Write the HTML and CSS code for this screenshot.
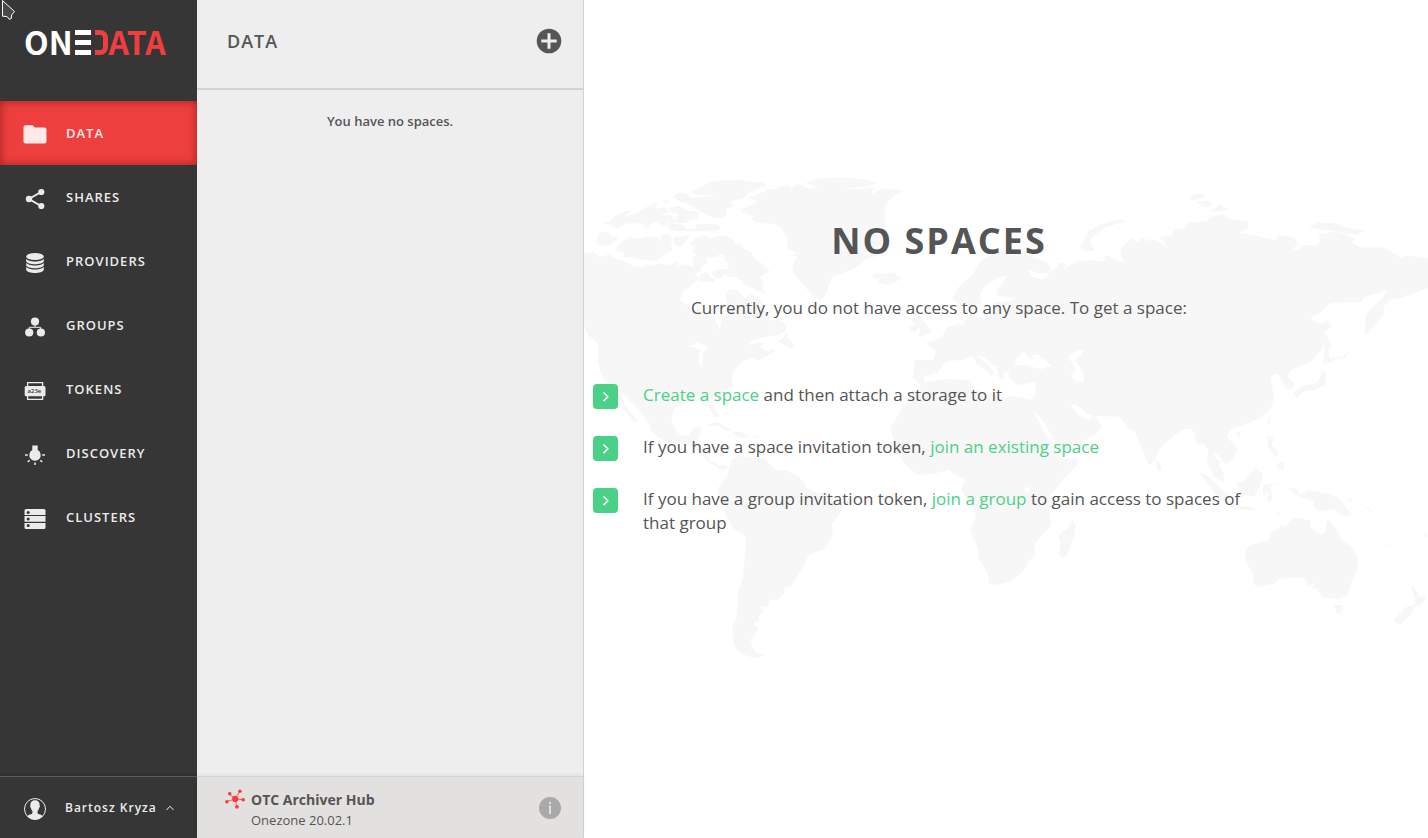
FILE: index.html
```html
<!DOCTYPE html>
<html lang="en">
<head>
<meta charset="utf-8">
<title>Onedata</title>
<link rel="stylesheet" href="styles.css">
</head>
<body>
<div class="app">
  <aside class="sidebar">
    <a class="logo" href="#" aria-label="Onedata">
      <span class="logo-text">ON</span>
      <span class="logo-bars"></span>
      <span class="logo-bracket"></span>
      <span class="logo-text logo-red">ATA</span>
    </a>
    <nav class="nav">
      <a class="nav-item active" href="#">
        <svg class="icon" viewBox="0 0 24 24"><path d="M2.500 2.200h7L12 4.600h9.500a2 2 0 0 1 2 2v12a2 2 0 0 1-2 2h-19a2 2 0 0 1-2-2V4.200a2 2 0 0 1 2-2z"/></svg>
        <span>DATA</span></a>
      <a class="nav-item" href="#">
        <svg class="icon" viewBox="0 0 24 24"><path d="M18 5 6 12l12 7" fill="none" stroke="currentColor" stroke-width="2"/><circle cx="18.300" cy="5" r="3.100"/><circle cx="6" cy="12" r="3.200"/><circle cx="18.300" cy="19" r="3.100"/></svg>
        <span>SHARES</span></a>
      <a class="nav-item" href="#">
        <svg class="icon" viewBox="0 0 24 24"><ellipse cx="12" cy="5.500" rx="8.800" ry="3.600"/><path d="M3.200 7.500c1 4 16.600 4 17.600 0v2.800c-1 4-16.600 4-17.600 0zM3.200 11.500c1 4 16.600 4 17.600 0v2.800c-1 4-16.600 4-17.600 0zM3.200 15.500c1 4 16.600 4 17.600 0v3.200c-1 4.400-16.600 4.400-17.600 0z"/></svg>
        <span>PROVIDERS</span></a>
      <a class="nav-item" href="#">
        <svg class="icon" viewBox="0 0 24 24"><path d="M12 8v4M6.300 17v-4.700h11.400V17" fill="none" stroke="currentColor" stroke-width="1"/><circle cx="12" cy="6.500" r="4.100"/><circle cx="6.200" cy="17.500" r="4.100"/><circle cx="17.900" cy="17.500" r="4.100"/></svg>
        <span>GROUPS</span></a>
      <a class="nav-item" href="#">
        <svg class="icon" viewBox="0 0 24 24"><path d="M4.600 7V3.700h15V7M4.600 17v3.300h15V17" fill="none" stroke="currentColor" stroke-width="1.300"/><rect x="1.700" y="7" width="20.800" height="10.300" rx="1.500"/><text class="token-code" x="4.500" y="14">a23e</text></svg>
        <span>TOKENS</span></a>
      <a class="nav-item" href="#">
        <svg class="icon" viewBox="0 0 24 24"><path d="M9.300 2.500h5.400V7a5.700 5.700 0 1 1-5.400 0z"/><path d="M2 12h2.800M19.200 12H22M4.700 18.800l2-1.400M19.300 18.800l-2-1.400M12 19.500V22" fill="none" stroke="currentColor" stroke-width="1.500"/></svg>
        <span>DISCOVERY</span></a>
      <a class="nav-item" href="#">
        <svg class="icon" viewBox="0 0 24 24"><path d="M3 2h18a1.500 1.500 0 0 1 1.500 1.500V8h-21V3.500A1.500 1.500 0 0 1 3 2zM1.500 9h21v5.800h-21zM1.500 15.900h21v4.600A1.500 1.500 0 0 1 21 22H3a1.500 1.500 0 0 1-1.500-1.500z"/><g fill="#363636"><circle cx="5.200" cy="5.400" r="1.500"/><circle cx="5.200" cy="11.900" r="1.500"/><circle cx="5.200" cy="18.500" r="1.500"/></g></svg>
        <span>CLUSTERS</span></a>
    </nav>
    <button class="user" type="button">
      <svg class="icon" viewBox="0 0 24 24"><circle cx="12" cy="12" r="10.500" fill="none" stroke="currentColor" stroke-width="1"/><path d="M12 3.200c3.200 0 4.800 2.200 4.600 5 .4.300.4 2-.4 2.600-.5 2-1.200 2.800-1.700 3.500 0 2.200.3 2.500 1.600 3 1.500.5 3 .9 3.600 2.200A10.500 10.500 0 0 1 12 22.500a10.500 10.500 0 0 1-7.700-3c.6-1.300 2.100-1.700 3.600-2.200 1.300-.5 1.600-.8 1.600-3-.5-.7-1.200-1.500-1.700-3.500-.8-.6-.8-2.300-.4-2.600-.2-2.800 1.400-5 4.600-5z"/></svg>
      <span class="user-name">Bartosz Kryza</span>
      <svg class="caret" viewBox="0 0 8 6"><path d="M.5 5 4 1.200 7.500 5"/></svg>
    </button>
  </aside>

  <section class="panel">
    <header class="panel-head">
      <h2 class="panel-title">DATA</h2>
      <button class="round-button" type="button" aria-label="Add space">
        <svg class="plus" viewBox="0 0 26 26"><circle cx="13" cy="13" r="12.300"/><path d="M13 5.300v15.400M5.300 13h15.400"/></svg>
      </button>
    </header>
    <p class="panel-empty">You have no spaces.</p>
    <footer class="panel-foot">
      <svg class="hub" viewBox="0 0 20 20"><path d="M10 10 4.500 5M10 10l4.700-7.500M10 10l8.200.7M10 10l2 7.700M10 10l-8.500 2.700" fill="none" stroke="currentColor" stroke-width=".8"/><circle cx="10.200" cy="9.900" r="3.100"/><circle cx="4.700" cy="4.800" r="1.800"/><circle cx="14.900" cy="2.200" r="1.800"/><circle cx="18.200" cy="10.700" r="1.800"/><circle cx="12" cy="17.800" r="1.900"/><circle cx="1.900" cy="12.700" r="1.800"/></svg>
      <div class="hub-text">
        <strong class="hub-name">OTC Archiver Hub</strong>
        <span class="hub-version">Onezone 20.02.1</span>
      </div>
      <button class="round-button" type="button" aria-label="About">
        <svg class="info" viewBox="0 0 22 22"><circle cx="11" cy="11" r="11"/><rect x="10" y="8.500" width="2" height="8.500"/><rect x="10" y="5" width="2" height="2"/></svg>
      </button>
    </footer>
  </section>

  <main class="main">
    <svg class="map" viewBox="0 -480 2532 2514" preserveAspectRatio="xMinYMid slice" aria-hidden="true">
      <!-- North America -->
      <path d="M0 280 28 275 48 292 75 283 95 296 120 302 148 318 180 321 185 314 205 318 222 310 262 317 276 300 282 318 300 312 330 320 325 300 338 280 352 290 365 285 372 310 352 318 348 338 330 340 346 358 320 378 296 395 288 420 305 432 318 442 345 448 372 466 392 472 398 492 408 507 413 478 436 452 428 420 425 398 438 388 462 392 482 415 502 402 530 420 543 452 560 482 585 478 606 492 606 512 580 526 535 532 500 545 492 555 520 548 540 548 530 560 545 574 565 568 575 572 545 590 520 603 512 592 500 594 475 605 448 632 443 665 450 678 420 694 392 716 382 732 400 756 405 770 392 770 372 740 345 724 318 726 296 734 272 744 262 772 270 805 290 826 316 826 326 804 352 800 350 820 340 840 352 866 374 882 380 904 404 915 422 915 435 922 422 932 398 922 372 905 358 888 330 862 300 850 260 850 225 833 198 810 196 790 170 755 138 722 110 697 122 735 165 788 150 784 112 740 90 698 64 665 50 638 42 600 42 552 12 524 0 500z"/>
      <!-- Arctic archipelago -->
      <path d="M318 96 342 85 390 62 470 60 535 68 551 78 500 94 478 116 440 122 448 138 426 148 425 168 395 176 345 152 318 135 288 125 268 112 282 99 302 98 326 114 350 112 400 106 370 104 340 106zM255 142 285 138 310 152 342 155 340 176 300 182 275 174 282 162 258 156zM55 188 78 184 90 170 120 155 142 150 125 168 152 162 170 150 200 134 220 132 215 148 245 140 256 155 238 164 270 166 265 176 298 178 318 186 290 190 250 186 245 200 215 186 200 190 188 207 170 190 130 190 98 205 85 195zM240 122 256 120 250 130 238 130zM202 132 220 128 215 138zM335 193 395 192 414 204 398 214 310 214 300 206 338 206zM255 188 290 194 306 202 300 214 275 213 250 204zM45 218 72 216 82 228 104 232 92 242 78 254 48 258 34 250 40 235zM98 262 112 246 138 232 165 236 192 228 222 232 232 250 226 226 258 224 265 240 260 252 266 270 245 282 214 304 170 298 142 292 118 290 120 276 98 274zM268 232 318 226 300 250 290 262 272 254zM328 238 360 226 378 236 400 228 430 228 448 240 448 250 472 254 480 266 502 278 510 294 528 305 558 332 540 342 528 352 540 368 536 384 546 402 518 392 505 384 480 372 458 352 438 350 420 344 408 356 390 350 382 336 410 328 432 326 434 310 418 296 426 282 404 284 398 290 372 292 350 290 325 276 332 262 320 252zM345 345 368 336 380 352 395 358 390 370 368 364 350 366z"/>
      <!-- Greenland and Iceland -->
      <path d="M470 150 498 138 522 124 508 120 486 114 508 108 548 92 538 86 578 88 580 80 614 76 622 84 640 72 678 86 700 80 664 70 700 56 775 52 842 58 880 70 842 80 785 86 815 88 868 82 864 102 900 84 925 88 960 92 938 102 912 122 902 148 902 180 908 205 905 240 880 262 902 268 885 286 845 298 818 322 775 340 748 346 735 376 722 412 710 421 688 410 668 386 648 362 632 345 625 326 626 310 640 290 622 286 640 278 612 268 608 230 590 200 570 192 512 188 502 176 512 168 478 160zM865 345 878 340 900 342 932 336 936 344 951 352 940 364 905 376 876 366 892 358 868 354z"/>
      <!-- Caribbean and Newfoundland -->
      <path d="M580 545 600 530 608 516 610 535 628 550 630 568 610 562 600 555zM366 796 395 786 420 796 448 812 426 811 400 798zM422 828 440 828 438 833zM446 816 468 814 488 825 500 830 478 834 455 830zM510 828 526 829 518 834zM418 760 430 756 428 764z"/>
      <!-- South America -->
      <path d="M437 922 442 900 468 882 476 890 500 890 530 896 545 892 552 910 578 930 612 932 640 946 662 970 668 985 702 998 745 1005 776 1026 780 1040 760 1070 744 1090 746 1126 734 1148 720 1168 690 1178 670 1192 660 1220 634 1258 620 1278 600 1282 602 1300 584 1318 556 1320 556 1334 546 1342 530 1338 540 1354 524 1370 524 1384 508 1392 526 1404 510 1424 500 1440 505 1460 515 1476 543 1484 530 1490 508 1494 470 1480 448 1456 445 1400 456 1376 462 1340 462 1296 476 1250 482 1200 486 1130 450 1108 430 1076 415 1034 400 1002 404 980 428 952z"/>
      <!-- Europe, Asia and Africa -->
      <path d="M1105 416 1120 385 1165 345 1190 302 1220 284 1250 270 1290 274 1340 288 1390 308 1402 325 1390 340 1358 338 1330 328 1345 350 1372 358 1390 350 1394 338 1424 318 1422 308 1445 308 1440 326 1475 305 1520 300 1562 304 1565 285 1590 296 1624 308 1610 290 1610 268 1645 231 1662 252 1672 234 1702 246 1695 234 1732 248 1750 266 1742 246 1722 232 1762 226 1768 208 1800 205 1815 188 1866 184 1880 172 1915 163 1940 178 1992 184 1994 204 1966 220 2010 226 2076 240 2086 224 2130 232 2142 252 2126 266 2142 272 2158 254 2202 258 2208 244 2204 224 2230 220 2252 214 2290 224 2312 238 2302 246 2330 262 2400 262 2435 284 2456 298 2462 286 2532 295 2532 385 2500 396 2450 414 2420 420 2398 440 2400 462 2378 490 2342 528 2344 465 2370 435 2396 415 2410 388 2392 398 2364 404 2340 412 2332 428 2302 426 2240 430 2212 454 2178 476 2205 492 2232 482 2242 500 2220 520 2216 565 2180 605 2118 632 2112 650 2130 670 2126 686 2104 688 2090 655 2078 640 2058 652 2064 676 2070 715 2062 742 2048 760 2018 780 1960 800 1936 812 1930 830 1960 866 1948 895 1926 912 1906 888 1884 874 1918 938 1918 968 1890 948 1868 905 1874 874 1860 852 1836 850 1832 818 1820 806 1796 808 1756 838 1724 870 1716 895 1698 916 1684 894 1664 842 1652 814 1640 812 1608 770 1534 768 1510 762 1490 744 1470 732 1462 736 1482 765 1516 782 1528 766 1558 800 1532 826 1484 850 1426 872 1420 884 1430 898 1484 894 1476 920 1440 955 1396 1010 1394 1040 1402 1094 1354 1150 1350 1190 1332 1206 1320 1232 1278 1266 1240 1274 1216 1274 1210 1238 1186 1200 1180 1160 1158 1112 1176 1070 1160 1030 1130 990 1146 956 1120 950 1094 930 1050 942 1000 944 960 910 935 870 920 805 950 750 982 712 1012 675 985 655 992 600 1048 600 1054 572 1024 550 1070 536 1090 502 1136 490 1158 464 1160 440 1130 436z"/>
      <path d="M982 475 1010 470 1024 492 1042 516 1020 528 1002 530 1010 508 995 500zM976 500 998 492 1000 512 980 518zM1488 265 1505 230 1512 216 1550 192 1615 178 1630 182 1560 204 1522 234 1518 252 1534 272 1508 274zM1810 122 1828 104 1850 98 1866 110 1840 118zM1834 124 1880 122 1884 138 1858 140zM1878 156 1910 132 1932 150zM2174 200 2200 188 2252 190 2282 200 2344 214 2316 224 2250 212 2220 210zM2128 698 2155 678 2200 668 2212 646 2212 628 2228 640 2224 674 2192 690 2160 694 2136 715zM2216 518 2230 530 2244 562 2232 562 2236 594 2268 590 2240 606 2216 614 2222 580zM2262 600 2298 572 2284 592z"/>
      <!-- Islands of the Indian and Pacific oceans -->
      <g transform="translate(1248 720)">
        <path d="M174 404 200 388 216 360 228 376 222 410 202 465 190 475 176 465 182 430zM468 182 482 190 486 208 472 213zM595 216 622 226 652 256 690 290 690 308 660 300 630 262zM640 170 668 188 652 190zM708 246 730 244 766 204 788 222 784 248 762 290 722 282zM690 318 740 320 780 328 740 330 694 324zM790 254 842 250 812 258 818 300 802 306 806 276 788 292zM800 108 820 110 816 136 838 160 826 170 805 142zM830 190 850 186 850 212 832 202zM780 212 802 178 790 200zM800 70 812 52 808 76zM706 96 724 94 718 110zM864 264 890 266 902 284 924 270 980 280 1015 294 1034 316 1056 346 1030 346 1002 328 960 334 940 320 942 304 890 286zM1035 302 1066 292 1050 306zM822 348 848 328 838 342zM1080 310 1145 348 1110 332zM1160 430 1182 444 1170 440zM1178 386 1196 412 1188 402zM1268 404 1280 402 1280 412 1270 412z"/>
        <path d="M736 450 748 436 806 420 812 400 836 384 842 376 856 380 880 354 934 360 930 382 966 406 976 396 984 352 998 376 1014 392 1022 418 1052 440 1074 470 1072 508 1050 560 1042 588 1016 597 970 592 952 568 934 566 946 546 924 560 914 534 880 530 836 538 820 552 776 560 758 552 762 530 744 496 736 474zM1002 614 1030 616 1026 640 1010 642zM1232 552 1250 572 1256 586 1278 592 1260 616 1242 620 1244 598zM1178 664 1216 622 1242 614 1240 634 1202 674z"/>
      </g>
      <!-- Inland seas -->
      <g fill="#fff">
        <path d="M310 560 340 547 368 558 372 572 358 574 354 610 348 618 344 590 350 572 330 562zM1172 470 1164 452 1180 430 1194 432 1186 410 1200 382 1234 356 1270 346 1254 372 1236 392 1244 408 1292 416 1270 424 1230 428 1226 460 1196 474zM1016 668 1022 648 1060 640 1078 610 1112 600 1130 604 1150 592 1170 590 1178 614 1210 632 1218 650 1230 638 1210 612 1176 584 1200 592 1238 622 1246 656 1260 660 1258 640 1276 630 1272 650 1300 676 1355 666 1354 702 1342 720 1288 708 1250 714 1222 692 1214 706 1170 688 1160 662 1100 656 1060 660zM1290 614 1296 598 1320 574 1334 594 1350 598 1344 586 1366 586 1404 618 1368 628 1330 616zM1454 590 1480 570 1500 572 1494 586 1474 600 1498 636 1500 666 1476 664 1462 648 1474 628zM1344 746 1376 780 1410 840 1422 876 1400 850 1366 786zM1322 984 1338 980 1338 992 1324 998z"/>
      </g>
    </svg>
    <div class="content">
      <h1 class="title">NO SPACES</h1>
      <p class="lead">Currently, you do not have access to any space. To get a space:</p>
      <ul class="steps">
        <li class="step"><span class="step-icon"><svg class="chevron" viewBox="0 0 8 12"><path d="m1.500 1.500 4.300 4.300-4.300 4.300"/></svg></span><p class="step-text"><a href="#">Create a space</a> and then attach a storage to it</p></li>
        <li class="step"><span class="step-icon"><svg class="chevron" viewBox="0 0 8 12"><path d="m1.500 1.500 4.300 4.300-4.300 4.300"/></svg></span><p class="step-text">If you have a space invitation token, <a href="#">join an existing space</a></p></li>
        <li class="step"><span class="step-icon"><svg class="chevron" viewBox="0 0 8 12"><path d="m1.500 1.500 4.300 4.300-4.300 4.300"/></svg></span><p class="step-text">If you have a group invitation token, <a href="#">join a group</a> to gain access to spaces of that group</p></li>
      </ul>
    </div>
  </main>
  <svg class="pointer" viewBox="0 0 16 22" aria-hidden="true"><path d="M2.500.5v15.700l4.500.3 2.300 2.800 2-.8.300-3.500 2.900-3.500z"/></svg>
</div>
</body>
</html>
```
FILE: styles.css
```css
* {
  box-sizing: border-box;
}

body {
  margin: 0;
  color: #555;
  font-family: "Open Sans", "Noto Sans", sans-serif;
}

h1, h2, p, ul {
  margin: 0;
  padding: 0;
}

button {
  padding: 0;
  border: 0;
  background: none;
  font: inherit;
  cursor: pointer;
}

svg {
  display: block;
  flex: none;
}

.app {
  position: relative;
  display: grid;
  grid-template-columns: 197px 387px 1fr;
  min-height: 100vh;
  background: #fff;
}

/* Sidebar */
.sidebar {
  display: flex;
  flex-direction: column;
  background: #363636;
  color: #ebebeb;
}

.logo {
  display: flex;
  align-items: center;
  height: 101px;
  padding: 0 0 16px 24px;
  font-family: "Noto Sans CJK SC", "Roboto", sans-serif;
  font-size: 32px;
  font-weight: 700;
  line-height: 40px;
  text-decoration: none;
}

.logo-text {
  padding-bottom: 4px;
  color: #fff;
}

.logo-bars {
  width: 16px;
  height: 25px;
  margin-left: 2px;
  border: solid #fff;
  border-width: 5px 0;
  background: linear-gradient(#fff, #fff) center / 100% 5px no-repeat;
}

.logo-bracket {
  width: 13px;
  height: 25px;
  margin: 0 1px 0 4px;
  border: 5px solid #f03e3e;
  border-left: 0;
  border-radius: 0 8px 8px 0;
}

.logo-red {
  color: #f03e3e;
}

.nav {
  flex: 1;
}

.nav-item {
  display: flex;
  align-items: center;
  gap: 19px;
  height: 64px;
  padding-left: 23px;
  color: #ebebeb;
  font-size: 13px;
  font-weight: 600;
  letter-spacing: 1px;
  text-decoration: none;
}

.nav-item.active {
  background: #ee3f3f;
  box-shadow: inset 0 0 10px rgba(90, 0, 0, 0.5);
  color: #ffe9e9;
}

.icon {
  width: 24px;
  height: 24px;
  margin-top: 3px;
  fill: currentColor;
}

.token-code {
  fill: #363636;
  font-size: 6px;
  letter-spacing: 0;
}

.user {
  display: flex;
  align-items: center;
  height: 62px;
  padding-left: 23px;
  border-top: 1px solid #5c5c5c;
  box-shadow: 0 -2px 3px rgba(0, 0, 0, 0.15);
  color: #ebebeb;
  font-size: 12px;
  font-weight: 600;
  letter-spacing: 1px;
}

.user-name {
  margin: 0 9px 0 18px;
}

.caret {
  width: 8px;
  height: 6px;
  fill: none;
  stroke: currentColor;
}

/* List panel */
.panel {
  display: flex;
  flex-direction: column;
  border-right: 1px solid #d3d3d3;
  background: #eee;
}

.panel-head {
  display: flex;
  align-items: center;
  justify-content: space-between;
  height: 90px;
  padding: 0 21px 6px 30px;
  border-bottom: 2px solid #d3d3d3;
}

.panel-title {
  font-size: 18px;
  font-weight: 600;
  line-height: 24px;
  letter-spacing: 1px;
}

.plus {
  width: 26px;
  height: 26px;
  fill: #555;
  stroke: #eee;
  stroke-width: 3;
}

.plus circle {
  stroke: none;
}

.panel-empty {
  flex: 1;
  padding-top: 21px;
  font-size: 13px;
  font-weight: 600;
  line-height: 20px;
  text-align: center;
}

.panel-foot {
  display: flex;
  align-items: center;
  height: 62px;
  padding: 0 22px 0 28px;
  border-top: 1px solid #d3d3d3;
  background: #e2e1df;
  box-shadow: 0 -2px 4px rgba(0, 0, 0, 0.05);
}

.hub {
  align-self: flex-start;
  width: 20px;
  height: 20px;
  margin-top: 12px;
  color: #fb3b3b;
  fill: currentColor;
}

.hub-text {
  display: flex;
  flex: 1;
  flex-direction: column;
  margin: 4px 0 0 6px;
  line-height: 20px;
}

.hub-name {
  font-size: 14px;
  font-weight: 700;
}

.hub-version {
  font-size: 13px;
}

.info {
  width: 22px;
  height: 22px;
  fill: #a9a9a9;
}

.info rect {
  fill: #e2e1df;
}

/* Main view */
.main {
  position: relative;
  overflow: hidden;
}

.map {
  position: absolute;
  inset: 0;
  width: 100%;
  height: 100%;
  fill: #f7f7f7;
}

.content {
  position: relative;
  max-width: 701px;
  padding: 217px 0 0 9px;
  font-size: 17px;
  line-height: 24px;
}

.title {
  font-size: 36px;
  font-weight: 700;
  line-height: 48px;
  letter-spacing: 2px;
  text-align: center;
}

.lead {
  margin: 31px 0 63px;
  text-align: center;
}

.steps {
  display: grid;
  gap: 28px;
  list-style: none;
}

.step {
  display: flex;
  align-items: flex-start;
  gap: 25px;
}

.step-icon {
  display: grid;
  flex: none;
  place-items: center;
  width: 25px;
  height: 25px;
  margin-top: 1px;
  margin-bottom: -2px;
  border-radius: 4px;
  background: #4bd187;
}

.chevron {
  width: 8px;
  height: 12px;
  fill: none;
  stroke: #fff;
  stroke-width: 1.5;
}

.step-text {
  max-width: 620px;
}

.step-text a {
  color: #4bd187;
  text-decoration: none;
}

.pointer {
  position: absolute;
  top: 0;
  left: 0;
  width: 16px;
  height: 22px;
  fill: #484848;
  stroke: #fff;
}
```
